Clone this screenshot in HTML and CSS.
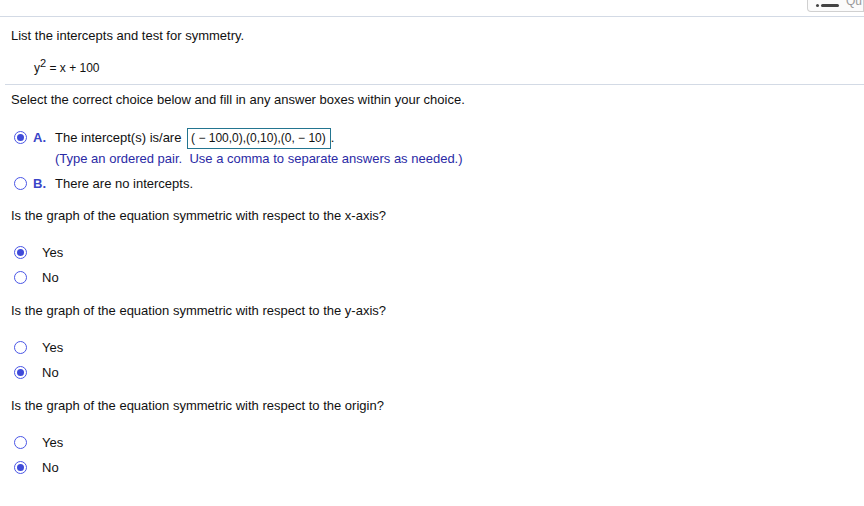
FILE: index.html
```html
<!DOCTYPE html>
<html>
<head>
<meta charset="utf-8">
<link rel="stylesheet" href="styles.css">
</head>
<body>
<div class="topbar">
  <div class="qbtn"><span class="qicon"><span class="dot"></span><span class="dash"></span></span><span class="qtext">Qu</span></div>
</div>
<div class="content">
  <div class="prompt">List the intercepts and test for symmetry.</div>
  <div class="equation">y<sup>2</sup> = x + 100</div>
  <div class="divider"></div>
  <div class="instr">Select the correct choice below and fill in any answer boxes within your choice.</div>

  <div class="choice choice-a">
    <span class="radio on"></span>
    <span class="letter">A.</span>
    <div class="choice-body">
      <div class="line">The intercept(s) is/are <span class="ansbox">( − 100,0),(0,10),(0, − 10)</span>.</div>
      <div class="hint">(Type an ordered pair.&nbsp; Use a comma to separate answers as needed.)</div>
    </div>
  </div>
  <div class="choice choice-b">
    <span class="radio"></span>
    <span class="letter">B.</span>
    <div class="choice-body"><div class="line">There are no intercepts.</div></div>
  </div>

  <div class="question first">Is the graph of the equation symmetric with respect to the x-axis?</div>
  <div class="opts">
    <div class="opt"><span class="radio on"></span><span>Yes</span></div>
    <div class="opt"><span class="radio"></span><span>No</span></div>
  </div>

  <div class="question">Is the graph of the equation symmetric with respect to the y-axis?</div>
  <div class="opts">
    <div class="opt"><span class="radio"></span><span>Yes</span></div>
    <div class="opt"><span class="radio on"></span><span>No</span></div>
  </div>

  <div class="question">Is the graph of the equation symmetric with respect to the origin?</div>
  <div class="opts">
    <div class="opt"><span class="radio"></span><span>Yes</span></div>
    <div class="opt"><span class="radio on"></span><span>No</span></div>
  </div>
</div>
</body>
</html>
```
FILE: styles.css
```css
* { box-sizing: border-box; }
html, body { margin: 0; padding: 0; background: #fff; }
body {
  font-family: "Liberation Sans", Arial, sans-serif;
  font-size: 13px;
  color: #111;
  width: 864px;
  height: 506px;
  overflow: hidden;
}
.topbar {
  height: 17px;
  border-bottom: 1px solid #d3dae5;
  display: flex;
  justify-content: flex-end;
}
.qbtn {
  width: 57px;
  height: 13px;
  margin-top: -1px;
  border: 1px solid #d0d0d0;
  border-top: none;
  border-radius: 0 0 0 4px;
  background: #fbfbfb;
  display: flex;
  align-items: center;
  padding-left: 8px;
  gap: 7px;
  overflow: hidden;
}
.qicon { display: flex; align-items: center; gap: 2px; }
.qicon .dot { width: 3px; height: 3px; border-radius: 50%; background: #444; }
.qicon .dash { width: 18px; height: 3px; border-radius: 2px; background: #444; }
.qtext { color: #999; font-size: 12px; line-height: 10px; margin-top: -8px; }

.content { padding: 0 0 0 11px; }
.prompt { margin-top: 11px; line-height: 15px; }
.equation {
  margin-top: 18px;
  padding-left: 23px;
  font-size: 12px;
  line-height: 15px;
}
.equation sup { font-size: 11px; line-height: 0; vertical-align: 5px; }
.divider {
  height: 1px;
  background: #d3dae5;
  margin: 8px 0 0 -6px;
}
.instr { margin-top: 7px; line-height: 15px; }

.choice { display: flex; align-items: flex-start; }
.choice-a { margin-top: 23px; }
.choice-b { margin-top: 10px; }
.radio {
  flex: none;
  width: 13px;
  height: 13px;
  border: 1.5px solid #4a56e6;
  border-radius: 50%;
  margin-left: 3px;
  display: inline-flex;
  align-items: center;
  justify-content: center;
  background: #fff;
}
.radio.on::after {
  content: "";
  width: 7px;
  height: 7px;
  border-radius: 50%;
  background: #3f4bd9;
}
.choice .radio { margin-top: 1px; }
.letter {
  color: #3a45c8;
  font-weight: bold;
  margin-left: 6px;
  width: 22px;
  line-height: 15px;
}
.line { line-height: 15px; }
.choice-a .line { line-height: 21px; margin-top: -3px; }
.ansbox {
  display: inline-block;
  border: 1px solid #237590;
  padding: 0 4px 0 3px;
  font-size: 12px;
  line-height: 19px;
  margin-left: 2px;
}
.hint { color: #2a2aa5; line-height: 15px; margin-top: 2px; }

.question { margin-top: 18px; line-height: 15px; }
.question.first { margin-top: 17px; }
.opts { margin-top: 22px; display: flex; flex-direction: column; gap: 10px; }
.opt { display: flex; align-items: center; height: 15px; }
.opt span:last-child { margin-left: 15px; }
.opts + .question { margin-top: 18px; }
```
